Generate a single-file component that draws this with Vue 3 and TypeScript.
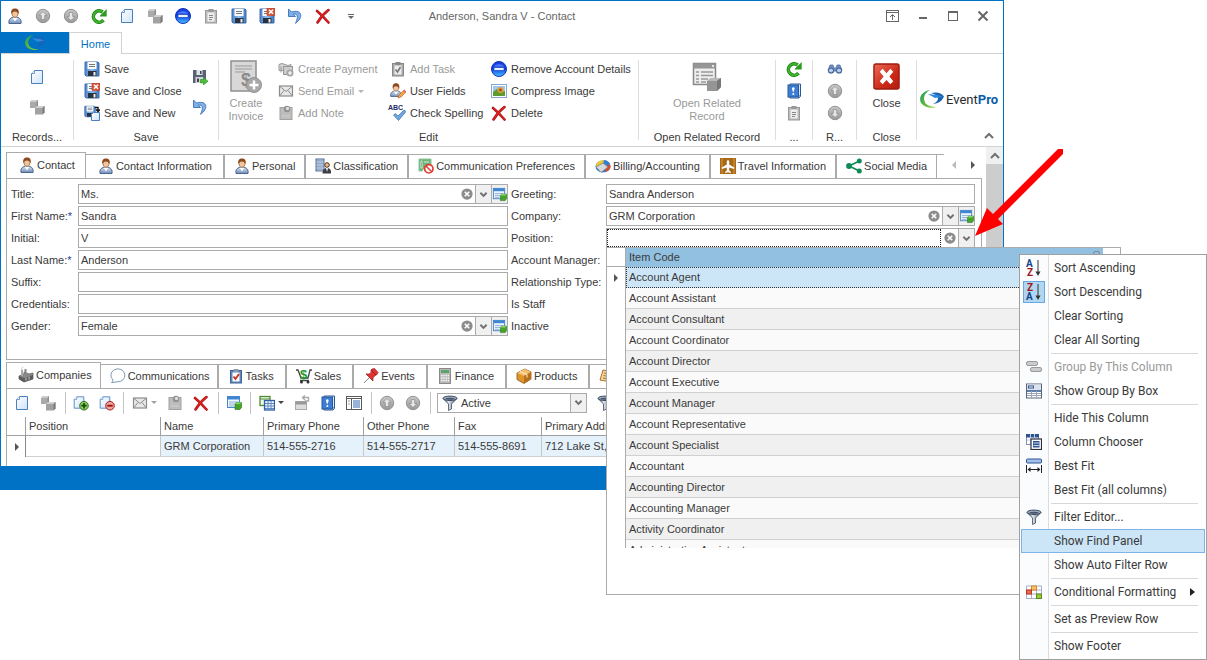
<script setup lang="ts">
import { h, ref } from 'vue'

interface IconProps { name: string }
interface Glyph { x: number; y: number; size: number; fill: string; char: string }
interface Tab { icon: string; label: string }
interface MenuItem { label?: string; icon?: string; disabled?: boolean; checked?: boolean; active?: boolean; sub?: boolean; sep?: boolean }
interface Action { icon: string; label: string; disabled?: boolean; drop?: boolean }

const glyphs: Record<string, Glyph[]> = {
  az: [
    { x: 0, y: 7, size: 10, fill: '#17468c', char: 'A' },
    { x: 1, y: 16, size: 10, fill: '#a31515', char: 'Z' },
  ],
  za: [
    { x: 1, y: 7, size: 10, fill: '#a31515', char: 'Z' },
    { x: 0, y: 16, size: 10, fill: '#17468c', char: 'A' },
  ],
  spell: [{ x: -2, y: 5, size: 7, fill: '#222c66', char: 'ABC' }],
  sales: [{ x: 4, y: 11, size: 13, fill: '#1f9a2c', char: '$' }],
}

const Icon = (props: IconProps) =>
  h('svg', { 'aria-hidden': 'true', viewBox: '0 0 16 16', overflow: 'visible' }, [
    h('use', { href: '#i-' + props.name, width: 16, height: 16 }),
    ...(glyphs[props.name] ?? []).map((g) =>
      h('text', { x: g.x, y: g.y, 'font-size': g.size, 'font-weight': 700, fill: g.fill }, g.char),
    ),
  ])

const quick: Tab[] = [
  { icon: 'person', label: 'Contact' },
  { icon: 'up', label: 'Previous' },
  { icon: 'down', label: 'Next' },
  { icon: 'refresh', label: 'Refresh' },
  { icon: 'page', label: 'New' },
  { icon: 'cubes', label: 'Copy' },
  { icon: 'remove', label: 'Remove' },
  { icon: 'clip', label: 'Paste' },
  { icon: 'save', label: 'Save' },
  { icon: 'saveclose', label: 'Save and Close' },
  { icon: 'undo', label: 'Undo' },
  { icon: 'x', label: 'Delete' },
]

const saveActions: Action[] = [
  { icon: 'save', label: 'Save' },
  { icon: 'saveclose', label: 'Save and Close' },
  { icon: 'savenew', label: 'Save and New' },
]

const editActions: Action[] = [
  { icon: 'payment', label: 'Create Payment', disabled: true },
  { icon: 'mail', label: 'Send Email', disabled: true, drop: true },
  { icon: 'note', label: 'Add Note', disabled: true },
  { icon: 'taskgrey', label: 'Add Task', disabled: true },
  { icon: 'userfields', label: 'User Fields' },
  { icon: 'spell', label: 'Check Spelling' },
  { icon: 'remove', label: 'Remove Account Details' },
  { icon: 'image', label: 'Compress Image' },
  { icon: 'x', label: 'Delete' },
]

const mainTabs: Tab[] = [
  { icon: 'person', label: 'Contact' },
  { icon: 'person', label: 'Contact Information' },
  { icon: 'person', label: 'Personal' },
  { icon: 'class', label: 'Classification' },
  { icon: 'compref', label: 'Communication Preferences' },
  { icon: 'billing', label: 'Billing/Accounting' },
  { icon: 'travel', label: 'Travel Information' },
  { icon: 'share', label: 'Social Media' },
]

const subTabs: Tab[] = [
  { icon: 'factory', label: 'Companies' },
  { icon: 'bubble', label: 'Communications' },
  { icon: 'task', label: 'Tasks' },
  { icon: 'sales', label: 'Sales' },
  { icon: 'pin', label: 'Events' },
  { icon: 'calc', label: 'Finance' },
  { icon: 'box', label: 'Products' },
  { icon: 'scroll', label: '' },
]

const title = ref('Ms.')
const firstName = ref('Sandra')
const initial = ref('V')
const lastName = ref('Anderson')
const suffix = ref('')
const credentials = ref('')
const gender = ref('Female')
const greeting = ref('Sandra Anderson')
const company = ref('GRM Corporation')
const position = ref('')
const filter = ref('Active')

const items = [
  'Account Agent', 'Account Assistant', 'Account Consultant', 'Account Coordinator',
  'Account Director', 'Account Executive', 'Account Manager', 'Account Representative',
  'Account Specialist', 'Accountant', 'Accounting Director', 'Accounting Manager',
  'Activity Coordinator', 'Administrative Assistant',
]

const menu: MenuItem[] = [
  { label: 'Sort Ascending', icon: 'az' },
  { label: 'Sort Descending', icon: 'za', checked: true },
  { label: 'Clear Sorting' },
  { label: 'Clear All Sorting' },
  { sep: true },
  { label: 'Group By This Column', icon: 'group', disabled: true },
  { label: 'Show Group By Box', icon: 'groupbox' },
  { sep: true },
  { label: 'Hide This Column' },
  { label: 'Column Chooser', icon: 'chooser' },
  { label: 'Best Fit', icon: 'bestfit' },
  { label: 'Best Fit (all columns)' },
  { sep: true },
  { label: 'Filter Editor...', icon: 'funnel' },
  { label: 'Show Find Panel', active: true },
  { label: 'Show Auto Filter Row' },
  { sep: true },
  { label: 'Conditional Formatting', icon: 'condfmt', sub: true },
  { sep: true },
  { label: 'Set as Preview Row' },
  { sep: true },
  { label: 'Show Footer' },
]
</script>

<template>
  <svg class="sprite" aria-hidden="true">
    <defs>
      <linearGradient id="g-grey" x1="0" y1="0" x2="0" y2="1"><stop offset="0" stop-color="#c8c8c8" /><stop offset="1" stop-color="#999999" /></linearGradient>
      <linearGradient id="g-page" x1="0" y1="0" x2="1" y2="1"><stop offset="0" stop-color="#ffffff" /><stop offset="1" stop-color="#cfe4fa" /></linearGradient>
      <linearGradient id="g-blue" x1="0" y1="0" x2="0" y2="1"><stop offset="0" stop-color="#1a3fe0" /><stop offset=".5" stop-color="#0d45e8" /><stop offset="1" stop-color="#4cc4ff" /></linearGradient>
      <linearGradient id="g-suit" x1="0" y1="0" x2="0" y2="1"><stop offset="0" stop-color="#d5dfec" /><stop offset="1" stop-color="#6f8db8" /></linearGradient>
      <linearGradient id="g-disk" x1="0" y1="0" x2="1" y2="0"><stop offset="0" stop-color="#4d84c8" /><stop offset=".5" stop-color="#8fbcec" /><stop offset="1" stop-color="#3f78be" /></linearGradient>
      <linearGradient id="g-red" x1="0" y1="0" x2="1" y2="1"><stop offset="0" stop-color="#ee6a58" /><stop offset=".6" stop-color="#cc2a18" /><stop offset="1" stop-color="#b01c10" /></linearGradient>
      <linearGradient id="g-swirl" x1="0" y1="0" x2="1" y2="1"><stop offset="0" stop-color="#1f9a5c" /><stop offset="1" stop-color="#8fd12c" /></linearGradient>
      <linearGradient id="g-funnel" x1="0" y1="0" x2="1" y2="0"><stop offset="0" stop-color="#3d4a5c" /><stop offset=".4" stop-color="#dfe6ee" /><stop offset="1" stop-color="#47566b" /></linearGradient>
    </defs>
    <symbol id="i-person" viewBox="0 0 16 16">
      <path d="M2 15.500c-.6-3 .5-5 3-6h6c2.500 1 3.600 3 3 6z" fill="url(#g-suit)" stroke="#4a6590" />
      <path d="M5.500 9.500l2.500 4 2.500-4z" fill="#fff" /><ellipse cx="8" cy="5.700" rx="3" ry="3.600" fill="#f2c49b" stroke="#8a5328" stroke-width=".6" />
      <path d="M4.300 6.500C3.600 2 5.300.4 8 .4s4.400 1.600 3.700 6.100C11 4.500 9.800 3.600 7.700 3.600 6 3.700 5 4.500 4.300 6.500z" fill="#8a4a1e" />
    </symbol>
    <symbol id="i-up" viewBox="0 0 16 16"><circle cx="8" cy="8" r="6.700" fill="url(#g-grey)" stroke="#929292" /><path d="M8 3.500l4 4H9.700v4H6.300v-4H4z" fill="#e6e6e6" stroke="#808080" stroke-width=".6" /></symbol>
    <symbol id="i-down" viewBox="0 0 16 16"><circle cx="8" cy="8" r="6.700" fill="url(#g-grey)" stroke="#929292" /><path d="M8 12.500l4-4H9.700v-4H6.300v4H4z" fill="#e6e6e6" stroke="#808080" stroke-width=".6" /></symbol>
    <symbol id="i-refresh" viewBox="0 0 16 16"><path d="M12.500 12.200A5.700 5.700 0 1 1 11.600 4" fill="none" stroke="#188018" stroke-width="3.600" /><path d="M12.500 12.200A5.700 5.700 0 1 1 11.600 4" fill="none" stroke="#40b428" stroke-width="2" /><path d="M9 7.500L15.700 1v7.500H9z" fill="#2c9a20" /></symbol>
    <symbol id="i-page" viewBox="0 0 16 16"><path d="M5.500 1.500h8v13h-11v-10z" fill="url(#g-page)" stroke="#4a7fc0" /><path d="M2.500 4.500h3v-3" fill="#fff" stroke="#6f9bd0" /></symbol>
    <symbol id="i-cubes" viewBox="0 0 16 16"><path d="M1 3l2-2h6v6L7.500 9H1z" fill="#aaa" /><path d="M1 3l2-2h6L7.500 3z" fill="#ccc" /><path d="M7.500 3v6L9 7V1z" fill="#8c8c8c" /><path d="M6 9l2-2h7.500v6.500L13.500 15.500H6z" fill="#a2a2a2" /><path d="M6 9l2-2h7.500l-2 2z" fill="#d0d0d0" /><path d="M13.500 9v6.500l2-2V7z" fill="#7c7c7c" /></symbol>
    <symbol id="i-remove" viewBox="0 0 16 16"><circle cx="8" cy="8" r="7.500" fill="url(#g-blue)" stroke="#1230b8" /><path d="M2.500 5.500Q8 1 13.500 5.500z" fill="#7fa0ff" opacity=".6" /><rect x="3" y="6.500" width="10" height="3" fill="#e8f4ff" stroke="#0a35b0" stroke-width=".6" /></symbol>
    <symbol id="i-clip" viewBox="0 0 16 16"><rect x="2.500" y="2.500" width="11" height="12.500" fill="#bbb" stroke="#999" /><rect x="4.500" y="4.500" width="7" height="9" fill="#eee" /><rect x="5.500" y="1" width="5" height="3" fill="#999" /><path d="M6 7.500h4M6 9.500h4M6 11.500h3" stroke="#888" /></symbol>
    <symbol id="i-save" viewBox="0 0 16 16"><path d="M1 1h13l1 1v13H2l-1-1z" fill="url(#g-disk)" stroke="#3a6cad" /><rect x="3.500" y="1" width="9" height="7" fill="#fafafa" /><path d="M5 3.500h6M5 5.500h6" stroke="#777" /><rect x="4" y="10" width="8.500" height="5" fill="#28323e" /><rect x="9.500" y="11" width="2" height="3.500" fill="#f0f0f0" /></symbol>
    <symbol id="i-saveclose" viewBox="0 0 16 16"><use href="#i-save" width="16" height="16" /><rect x="8" y="0" width="8" height="7.500" fill="#d8583c" stroke="#b83820" stroke-width=".6" /><path d="M10 1.800l4 4M14 1.800l-4 4" stroke="#fff" stroke-width="1.500" /></symbol>
    <symbol id="i-savenew" viewBox="0 0 16 16"><use href="#i-save" width="12" height="13" /><path d="M9.500 7.500h6v8h-8v-6z" fill="url(#g-page)" stroke="#4a7fc0" /><path d="M11 2.500h3V6M12 4.500l2 2 2-2" fill="none" stroke="#111" stroke-width="1.400" /></symbol>
    <symbol id="i-savego" viewBox="0 0 16 16"><path d="M1 1h13v13H1z" fill="#596274" /><rect x="4.500" y="1" width="6" height="5" fill="#dfe3ea" /><rect x="8" y="2" width="1.500" height="3" fill="#444" /><rect x="3.500" y="8" width="8" height="6" fill="#d2d5dc" /><rect x="5" y="9.500" width="2" height="3.500" fill="#444" /><path d="M8.500 10.500h3V8.500l4.500 3.700-4.500 3.700v-2h-3z" fill="#4cc038" stroke="#2a8c20" stroke-width=".6" /></symbol>
    <symbol id="i-undo" viewBox="0 0 16 16"><path d="M1.500 1v7.500h7L6.300 6.300C10 5 12 8 8.500 15.300 16.500 10 15.500.8 4.500 4z" fill="#7fb0e8" stroke="#3a70b8" stroke-width=".9" /></symbol>
    <symbol id="i-x" viewBox="0 0 16 16"><path d="M2 3c3 2.500 8 7.500 11.500 11.500M13.500 2C9.500 5 5.500 9.500 2.500 14.500" fill="none" stroke="#a01414" stroke-width="2.600" stroke-linecap="round" /><path d="M2 3c3 2.500 8 7.500 11.500 11.500M13.500 2C9.500 5 5.500 9.500 2.500 14.500" fill="none" stroke="#dc2020" stroke-width="1.600" stroke-linecap="round" /></symbol>
    <symbol id="i-payment" viewBox="0 0 16 16"><path d="M1 3.500q3-2 6 0t6 0v6H1z" fill="#d5d5d5" stroke="#999" /><path d="M3 5.500v6M6 6v6" stroke="#999" /><rect x="5.500" y="5.500" width="9" height="8" fill="#ccc" stroke="#999" /><circle cx="12" cy="12" r="3.500" fill="#a5a5a5" /><path d="M12 10v4M10 12h4" stroke="#fff" stroke-width="1.200" /></symbol>
    <symbol id="i-mail" viewBox="0 0 16 16"><rect x="1.500" y="3" width="13" height="10" fill="#e8e8e8" stroke="#8c8c8c" stroke-width="1.200" /><path d="M2 3.500l6 5 6-5M2 12.500l4-5M14 12.500l-4-5" fill="none" stroke="#8c8c8c" /></symbol>
    <symbol id="i-note" viewBox="0 0 16 16"><rect x="2" y="2.500" width="12" height="12" fill="#bdbdbd" stroke="#a2a2a2" /><circle cx="9" cy="4" r="3.200" fill="#909090" /><circle cx="9.500" cy="3.500" r="1.700" fill="#ddd" /><path d="M4 11h8" stroke="#cfcfcf" /></symbol>
    <symbol id="i-taskgrey" viewBox="0 0 16 16"><rect x="2.500" y="2.500" width="11" height="12.500" fill="#aaa" stroke="#888" /><rect x="4.500" y="4.500" width="7" height="9" fill="#eee" /><rect x="5.500" y="1" width="5" height="3" fill="#888" /><path d="M5.500 8.500l2 2.500 3-5" fill="none" stroke="#777" stroke-width="1.600" /></symbol>
    <symbol id="i-task" viewBox="0 0 16 16"><rect x="2.500" y="2.500" width="11" height="12.500" fill="#5c86bc" stroke="#3c6498" /><rect x="4.500" y="4.500" width="7" height="9" fill="#fff" /><rect x="5.500" y="1" width="5" height="3" fill="#8a9bb0" /><path d="M5.500 8.500l2 2.500 3.500-5" fill="none" stroke="#c83020" stroke-width="1.800" /></symbol>
    <symbol id="i-userfields" viewBox="0 0 16 16"><use href="#i-person" x="-1" width="14" height="14" /><path d="M8 15l1-3 5-5 2 2-5 5z" fill="#f0a848" stroke="#c86418" stroke-width=".7" /><path d="M13 8l1.500-1.500 1.500 2L15 9.500z" fill="#d86890" /></symbol>
    <symbol id="i-spell" viewBox="0 0 16 16"><path d="M3.500 10l2-1.500 2.500 2.500L14 5l2 1.500L8.500 15.500z" fill="#6fa8e0" stroke="#3a6eaa" stroke-width=".7" /></symbol>
    <symbol id="i-image" viewBox="0 0 16 16"><rect x=".5" y="1.500" width="15" height="13" fill="#fff" stroke="#8aa6d0" /><rect x="2" y="3" width="12" height="10" fill="#9cc8f4" /><path d="M2 13V9l4-3 3 3 5-1v5z" fill="#5f9a2c" /><circle cx="9.500" cy="7" r="3" fill="#e89a30" /><circle cx="9.500" cy="7" r="1.200" fill="#7c4a12" /></symbol>
    <symbol id="i-invoice" viewBox="0 0 32 36"><rect x="1" y="1" width="25" height="30" fill="#d8d8d8" stroke="#8f8f8f" stroke-width="1.500" /><path d="M5 6h17M5 9h17M5 12h10" stroke="#999" /></symbol>
    <symbol id="i-plus" viewBox="0 0 16 16"><circle cx="8" cy="8" r="7.500" fill="#a8a8a8" stroke="#929292" /><path d="M8 3.500v9M3.500 8h9" stroke="#fff" stroke-width="2.500" /></symbol>
    <symbol id="i-openrel" viewBox="0 0 32 32"><rect x="1.500" y="1.500" width="22" height="21" fill="#eee" stroke="#888" stroke-width="1.500" /><rect x="1.500" y="1.500" width="22" height="5" fill="#969696" /><circle cx="21" cy="4" r="1" fill="#fff" /><path d="M4 10h3M9 10h12M4 13.500h3M9 13.500h12M4 17h3M9 17h7M4 20h3M9 20h5" stroke="#999" stroke-width="1.300" /><path d="M15 19l4-3h10v9l-4 4h-10z" fill="#959595" /><path d="M15 19l4-3h10l-4 3z" fill="#b9b9b9" /><path d="M25 19v10l4-4V16z" fill="#777" /></symbol>
    <symbol id="i-book" viewBox="0 0 16 16"><path d="M4 1h10.500v12H4z" fill="#dce8f6" stroke="#28589c" /><path d="M3 13l1 2h9l1.500-2" fill="#dce8f6" stroke="#28589c" /><rect x="2" y="2" width="10.500" height="12" fill="#3d7ed4" stroke="#28589c" /><path d="M7.300 4.300q2 0 1 2.500l-.5 2h-1l-.5-2q-1-2.500 1-2.500z" fill="#fff" /><circle cx="7.300" cy="11" r="1" fill="#fff" /></symbol>
    <symbol id="i-binoc" viewBox="0 0 16 16"><path d="M3 4h3l1 3h2l1-3h3l2 5-1 3h-4l-1-2H7l-1 2H2L1 9z" fill="#6f8fc4" stroke="#4c689a" stroke-width=".7" /><circle cx="4" cy="9.500" r="2.500" fill="#b8ccec" stroke="#3c5a90" /><circle cx="12" cy="9.500" r="2.500" fill="#b8ccec" stroke="#3c5a90" /></symbol>
    <symbol id="i-closebig" viewBox="0 0 28 28"><rect x="1" y="1" width="26" height="26" rx="2" fill="url(#g-red)" stroke="#9e1c10" stroke-width="1.500" /><path d="M7 9l3-3 4 4.500L18 6l3 3-4 5 4 5-3 3-4-4.500L10 22l-3-3 4-5z" fill="#fff" /></symbol>
    <symbol id="i-class" viewBox="0 0 16 16"><rect x="1" y="1" width="8" height="12" fill="#7f98bc" stroke="#5a7298" /><path d="M3 1v12M5 1v12M7 1v12M1 4h8M1 7h8M1 10h8" stroke="#c8d6ea" stroke-width=".7" /><circle cx="12" cy="7" r="2.300" fill="#f0bc84" stroke="#4a3020" /><path d="M7.500 15.500q0-5.500 4.500-5.500t4 5.500z" fill="#3c3c44" /><path d="M11 10h2l-1 4z" fill="#fff" /></symbol>
    <symbol id="i-compref" viewBox="0 0 16 16"><path d="M1 1h12v9H6l-2 3H1z" fill="#6cb478" stroke="#8cc498" /><path d="M3 3h1v7H3zM6 4h5" stroke="#d8f0dc" /><circle cx="10.800" cy="10.800" r="4.200" fill="#fff" stroke="#e03c30" stroke-width="1.700" /><path d="M8 8l6 6" stroke="#e03c30" stroke-width="1.500" /></symbol>
    <symbol id="i-billing" viewBox="0 0 16 16"><ellipse cx="8" cy="8.500" rx="7.500" ry="6" fill="#2f7fd4" /><path d="M8 8.500L1 9q-1-6 8-7z" fill="#f0c830" /><path d="M8 8.500l7-2q2 4-4 7.500z" fill="#d84a30" /><path d="M8 8.500L15 6q-2-4-6-4z" fill="#2f7fd4" /><path d="M1 9l7-4 5 4-7 5.500z" fill="#d4d8dc" stroke="#777" stroke-width=".7" /></symbol>
    <symbol id="i-travel" viewBox="0 0 16 16"><rect width="16" height="16" fill="#a8681a" /><path d="M2 0v16M14 0v16" stroke="#d49c3c" /><path d="M8 1.500l1.200 2V6.500l5 3V11l-5-1.500v3L11 14v1l-3-.8L5 15v-1l1.800-1.500v-3L1.800 11V9.500l5-3v-3z" fill="#fff" /></symbol>
    <symbol id="i-share" viewBox="0 0 16 16"><path d="M13.500 3L3 8l10.500 5" fill="none" stroke="#0e8a54" stroke-width="1.700" /><circle cx="13.300" cy="3" r="2.500" fill="#0e8a54" /><circle cx="3" cy="8" r="2.900" fill="#0e8a54" /><circle cx="13.300" cy="13" r="2.500" fill="#0e8a54" /></symbol>
    <symbol id="i-factory" viewBox="0 0 16 16"><path d="M1 9l5-2V5l5 2 4-1v6l-9 3-5-3z" fill="#8a8a8a" stroke="#5a5a5a" stroke-width=".7" /><path d="M1 9l5 2 9-3v4l-9 3-5-3z" fill="#5c5c5c" /><rect x="3" y="3" width="2" height="6" fill="#aaa" /><rect x="6.500" y="2" width="2" height="6" fill="#888" /><path d="M4 3Q3 1 5 0M8 10.500v3M11 9.500v3" stroke="#ccc" fill="none" /></symbol>
    <symbol id="i-bubble" viewBox="0 0 16 16"><path d="M1.500 14.500q1.500-1 1.500-2.500A7 6.500 0 1 1 7 13.800Q4 14.500 1.500 14.500z" fill="#fff" stroke="#7c98b4" /></symbol>
    <symbol id="i-sales" viewBox="0 0 16 16"><path d="M0 2h2l3 8h7l2-8h2M4 12.500h9" fill="none" stroke="#444" stroke-width="1.300" /><circle cx="5.500" cy="14" r="1.500" fill="#333" /><circle cx="12" cy="14" r="1.500" fill="#333" /></symbol>
    <symbol id="i-pin" viewBox="0 0 16 16"><path d="M6 10l-5 5" stroke="#888" /><path d="M8 2l5 5 1-.5 1-2L11.500.5 9 1zM8 2Q9 5 6 6H3l7 7V10q1-2 3-3z" fill="#e03434" stroke="#a01818" stroke-width=".7" /></symbol>
    <symbol id="i-calc" viewBox="0 0 16 16"><rect x="2.500" y=".5" width="11" height="15" fill="#b8b8b8" stroke="#8a8a8a" /><rect x="4" y="2" width="8" height="3" fill="#5ca46c" /><path d="M4 7.500h8M4 10h8M4 12.500h8" stroke="#f4f4f4" stroke-width="1.400" stroke-dasharray="1.500 .7" /></symbol>
    <symbol id="i-box" viewBox="0 0 16 16"><path d="M1 5l8-4 6 3v7l-7 4.500-7-4z" fill="#e0962c" stroke="#8a5210" stroke-width=".8" /><path d="M1 5l7 3 7-4-6-3z" fill="#f4c070" /><path d="M8 8v7.500l7-4.500V4z" fill="#b8701c" /><path d="M4 3.500l7 3v3" fill="none" stroke="#fff0c8" /></symbol>
    <symbol id="i-scroll" viewBox="0 0 16 16"><path d="M4 2l10 2-2 10L1 12z" fill="#f4d49c" stroke="#a8742c" /><path d="M5 5l6 1.200M4.500 7.500l6 1.200M4 10l6 1.200" stroke="#a8742c" /></symbol>
    <symbol id="i-addpage" viewBox="0 0 16 16"><use href="#i-page" x="-1" width="14" height="15" /><circle cx="11" cy="10.700" r="4.300" fill="#8ccc64" stroke="#2f701c" /><path d="M11 8v5.400M8.300 10.700h5.400" stroke="#174c0c" stroke-width="1.700" /></symbol>
    <symbol id="i-delpage" viewBox="0 0 16 16"><use href="#i-page" x="-1" width="14" height="15" /><circle cx="11" cy="10.700" r="4.300" fill="#f0a49c" stroke="#a82020" /><path d="M8.300 10.700h5.400" stroke="#981414" stroke-width="1.900" /></symbol>
    <symbol id="i-lookup" viewBox="0 0 16 16"><rect x="1.500" y="1.500" width="12" height="11" fill="#eef6fc" stroke="#4a86c8" /><rect x="1.500" y="1.500" width="12" height="3" fill="#3f86d4" /><path d="M3 7h9M3 9h6M3 11h5" stroke="#8ab0d8" /><path d="M9 9l1.500-1.500H15.500v5L14 14.500H9z" fill="#44a428" stroke="#23701a" stroke-width=".6" /><path d="M9 9l1.500-1.500H15.500L14 9z" fill="#8cd86c" /></symbol>
    <symbol id="i-multi" viewBox="0 0 16 16"><rect x="1" y="1.500" width="10" height="9" fill="#eef8e4" stroke="#4c8a34" stroke-width="1.300" /><path d="M1 4h10" stroke="#4c8a34" /><rect x="5.500" y="5.500" width="10" height="9.500" fill="#eef4fc" stroke="#2e60a8" stroke-width="1.300" /><path d="M6 8.500h9M6 11h9M6 13.500h9M9 6v9M12 6v9" stroke="#6088c0" /></symbol>
    <symbol id="i-restore" viewBox="0 0 16 16"><rect x="1.500" y="6.500" width="11" height="8" fill="#ddd" stroke="#aaa" /><rect x="1.500" y="6.500" width="11" height="3" fill="#999" /><path d="M9 2.500h5.500V6H11M11 .5L8.500 2.500 11 5" fill="none" stroke="#aaa" stroke-width="1.400" /></symbol>
    <symbol id="i-layout" viewBox="0 0 16 16"><rect x=".5" y="1.500" width="15" height="13" fill="#fff" stroke="#5a5a5a" /><path d="M1 3.500h14M5.500 3.500v11" stroke="#5a5a5a" /><path d="M7 6h7M7 8h7M7 10h7M7 12h7" stroke="#2e66b4" /><path d="M2 6h2M2 9h2" stroke="#999" /></symbol>
    <symbol id="i-funnel" viewBox="0 0 16 16"><path d="M1 3.500L6.500 9v6.500l3-1.500V9L15 3.500z" fill="url(#g-funnel)" stroke="#3f4c5e" stroke-width=".8" /><ellipse cx="8" cy="3.300" rx="7" ry="2.200" fill="#9fb0c4" stroke="#3f4c5e" /><ellipse cx="8" cy="3.800" rx="4.500" ry="1" fill="#47566b" /></symbol>
    <symbol id="i-clear" viewBox="0 0 16 16"><circle cx="8" cy="8" r="7.500" fill="#8c8c8c" /><path d="M5 5l6 6M11 5l-6 6" stroke="#fff" stroke-width="2" /></symbol>
    <symbol id="i-chev" viewBox="0 0 16 16"><path d="M3.500 5.500L8 10l4.500-4.500" fill="none" stroke="#707070" stroke-width="2.800" /></symbol>
    <symbol id="i-chevup" viewBox="0 0 16 16"><path d="M4 10l4-4 4 4" fill="none" stroke="#707070" stroke-width="2" /></symbol>
    <symbol id="i-az" viewBox="0 0 16 16"><path d="M12 0v14" stroke="#333" /><path d="M9.500 11.500h5L12 16z" fill="#333" /></symbol>
    <symbol id="i-za" viewBox="0 0 16 16"><path d="M12 0v14" stroke="#333" /><path d="M9.500 11.500h5L12 16z" fill="#333" /></symbol>
    <symbol id="i-group" viewBox="0 0 16 16"><rect x=".5" y="2.500" width="11" height="4" rx="1.500" fill="#ccc" stroke="#999" /><rect x="4.500" y="8.500" width="11" height="4" rx="1.500" fill="#ccc" stroke="#999" /></symbol>
    <symbol id="i-groupbox" viewBox="0 0 16 16"><rect x=".5" y="1" width="15" height="14" fill="#fff" stroke="#5a6478" /><rect x="1" y="1.500" width="14" height="6" fill="#dde3ee" /><rect x="2.500" y="3" width="5" height="2" fill="#fff" stroke="#2e5490" /><path d="M1 8h14" stroke="#2e5490" stroke-width="1.500" /><path d="M1 10.500h14M1 12.500h14M5.500 8v7M10.500 8v7" stroke="#9aa4b8" /></symbol>
    <symbol id="i-chooser" viewBox="0 0 16 16"><rect x=".5" y=".5" width="12" height="10" fill="#fff" stroke="#7c94bc" /><rect x="0" y="0" width="13" height="3.500" fill="#2e5490" /><path d="M4.500 0v10M8.500 0v10M1 6h4" stroke="#c0cce0" /><rect x="5" y="5" width="10.500" height="10.500" fill="#fff" stroke="#2a2f3c" stroke-width="1.200" /><rect x="7" y="7" width="6.500" height="6.500" fill="#2e5490" /><path d="M7.500 9h6M7.500 11.500h6" stroke="#c9d8f0" /></symbol>
    <symbol id="i-bestfit" viewBox="0 0 16 16"><rect x=".5" y="1" width="15" height="4" rx="1" fill="#a4c0ec" stroke="#2e5490" /><path d="M.5 7v8M15.500 7v8M2 11.500h12" stroke="#222" /><path d="M1.500 11.500l3-2.500v5zM14.500 11.500l-3-2.500v5z" fill="#222" /></symbol>
    <symbol id="i-condfmt" viewBox="0 0 16 16"><rect x=".5" y="2" width="15" height="12.500" fill="#fff" stroke="#a8b0cc" /><path d="M.5 6h15M.5 10h15M5.500 2v12M10.500 2v12" stroke="#a8b0cc" /><rect x="5.500" y="2" width="5" height="4" fill="#f8c068" stroke="#d08a20" /><rect x=".5" y="6" width="5" height="4" fill="#e86850" stroke="#c03420" /><rect x="10.500" y="10" width="5" height="4.500" fill="#9ac83c" stroke="#5c8a1c" /></symbol>
    <symbol id="i-ribbonopt" viewBox="0 0 16 16"><rect x="1.500" y="2.500" width="12" height="11" fill="none" stroke="#666" /><path d="M1.500 4.500h12" stroke="#666" /><path d="M7.500 12V7M5 9l2.500-2.500L10 9" fill="none" stroke="#666" /></symbol>
    <symbol id="i-min" viewBox="0 0 16 16"><path d="M4 10h8" stroke="#666" stroke-width="2" /></symbol>
    <symbol id="i-max" viewBox="0 0 16 16"><rect x="3.500" y="3.500" width="9" height="9" fill="none" stroke="#666" /><path d="M3 4h10" stroke="#666" stroke-width="2" /></symbol>
    <symbol id="i-closewin" viewBox="0 0 16 16"><path d="M3.500 3.500l9 9M12.500 3.500l-9 9" stroke="#666" stroke-width="2" /></symbol>
    <symbol id="i-swirl" viewBox="0 0 26 20"><path d="M11 1C-1 3-3 16 10 18.500q4 .8 7-.5Q6 18 5 10.500 4.500 4.500 11 1z" fill="url(#g-swirl)" /><path d="M12 4q9-2 13 3.500-3 7-11 7.500 5-2.500 5-5.500 0-4-7-5.500z" fill="#1a62b4" /><path d="M9 5l10 1 5 2-8 1z" fill="#2f88d8" /></symbol>
  </svg>

  <main class="page">
    <section class="window" aria-label="Contact window">
      <header class="titlebar">
        <div class="quick">
          <button v-for="q in quick" :key="q.icon" type="button" :aria-label="q.label"><Icon :name="q.icon" class="ico" /></button>
          <button type="button" aria-label="Customize toolbar"><span class="overflow-mark"></span></button>
        </div>
        <h1>Anderson, Sandra V - Contact</h1>
        <div class="winctl">
          <button type="button" aria-label="Ribbon options"><Icon name="ribbonopt" class="ico" /></button>
          <button type="button" aria-label="Minimize"><Icon name="min" class="ico" /></button>
          <button type="button" aria-label="Maximize"><Icon name="max" class="ico" /></button>
          <button type="button" aria-label="Close window"><Icon name="closewin" class="ico" /></button>
        </div>
      </header>

      <nav class="ribbon-tabs">
        <button type="button" class="app-button" aria-label="Application menu"><svg viewBox="0 0 26 20" aria-hidden="true"><use href="#i-swirl" width="26" height="20" /></svg></button>
        <button type="button" class="home">Home</button>
      </nav>

      <div class="ribbon">
        <div class="group g-records">
          <div class="stack">
            <button type="button" aria-label="New record"><Icon name="page" class="ico" /></button>
            <button type="button" aria-label="Copy record"><Icon name="cubes" class="ico" /></button>
          </div>
          <div class="caption">Records...</div>
        </div>
        <div class="group g-save">
          <div class="row">
            <div class="actions save-actions">
              <button v-for="a in saveActions" :key="a.label" type="button" class="action"><Icon :name="a.icon" class="ico" />{{ a.label }}</button>
            </div>
            <div class="stack">
              <button type="button" aria-label="Save and continue"><Icon name="savego" class="ico" /></button>
              <button type="button" aria-label="Undo changes"><Icon name="undo" class="ico" /></button>
            </div>
          </div>
          <div class="caption">Save</div>
        </div>
        <div class="group g-edit">
          <div class="row">
            <button type="button" class="large" disabled>
              <svg class="big" viewBox="0 0 32 36" aria-hidden="true">
                <use href="#i-invoice" y="2" width="32" height="36" />
                <text x="11" y="28" font-size="18" font-weight="700" fill="#8a8a8a">$</text>
                <use href="#i-plus" x="16" y="19" width="16" height="16" />
              </svg>
              <span>Create<br />Invoice</span>
            </button>
            <div class="actions edit-actions">
              <button v-for="a in editActions" :key="a.label" type="button" class="action" :disabled="a.disabled"><Icon :name="a.icon" class="ico" />{{ a.label }}<i v-if="a.drop" class="tri"></i></button>
            </div>
          </div>
          <div class="caption">Edit</div>
        </div>
        <div class="group g-open">
          <button type="button" class="large" disabled><svg class="big" viewBox="0 0 32 36" aria-hidden="true"><use href="#i-openrel" x="1" y="4" width="32" height="32" /></svg><span>Open Related<br />Record</span></button>
          <div class="caption">Open Related Record</div>
        </div>
        <div class="group g-more">
          <div class="column">
            <button type="button" aria-label="Refresh"><Icon name="refresh" class="ico" /></button>
            <button type="button" aria-label="Log"><Icon name="book" class="ico" /></button>
            <button type="button" aria-label="Clipboard"><Icon name="clip" class="ico" /></button>
          </div>
          <div class="caption">...</div>
        </div>
        <div class="group g-nav">
          <div class="column">
            <button type="button" aria-label="Find"><Icon name="binoc" class="ico" /></button>
            <button type="button" aria-label="Previous record"><Icon name="up" class="ico" /></button>
            <button type="button" aria-label="Next record"><Icon name="down" class="ico" /></button>
          </div>
          <div class="caption">R...</div>
        </div>
        <div class="group g-close">
          <button type="button" class="large"><svg class="big" viewBox="0 0 32 36" aria-hidden="true"><use href="#i-closebig" x="2" y="5" width="27" height="27" /></svg><span>Close</span></button>
          <div class="caption">Close</div>
        </div>
        <div class="brand">
          <div class="logo"><svg viewBox="0 0 26 20" aria-hidden="true"><use href="#i-swirl" width="26" height="20" /></svg><span>Event<b>Pro</b></span></div>
          <button type="button" class="collapse" aria-label="Collapse ribbon"><Icon name="chevup" class="ico" /></button>
        </div>
      </div>

      <div class="body">
        <div class="content">
          <div class="tabs main-tabs" role="tablist">
            <button v-for="(t, i) in mainTabs" :key="t.label" type="button" role="tab" class="tab" :class="{ active: i === 0 }" :aria-selected="i === 0"><Icon :name="t.icon" class="ico" />{{ t.label }}</button>
            <span class="tab-rest"></span>
            <button type="button" class="tab-nav" aria-label="Previous tabs" disabled><i class="left"></i></button>
            <button type="button" class="tab-nav" aria-label="More tabs"><i class="right"></i></button>
          </div>

          <form class="form" @submit.prevent>
            <label for="f-title">Title:</label>
            <div class="field">
              <select id="f-title" v-model="title"><option>Ms.</option></select>
              <button type="button" class="clear" aria-label="Clear title"><Icon name="clear" /></button>
              <button type="button" class="part" aria-label="Open title list"><Icon name="chev" /></button>
              <button type="button" class="part look" aria-label="Look up title"><Icon name="lookup" /></button>
            </div>
            <label for="f-greet">Greeting:</label>
            <div class="field"><input id="f-greet" v-model="greeting" type="text" /></div>

            <label for="f-first">First Name:<em>*</em></label>
            <div class="field"><input id="f-first" v-model="firstName" type="text" /></div>
            <label for="f-company">Company:</label>
            <div class="field">
              <select id="f-company" v-model="company"><option>GRM Corporation</option></select>
              <button type="button" class="clear" aria-label="Clear company"><Icon name="clear" /></button>
              <button type="button" class="part" aria-label="Open company list"><Icon name="chev" /></button>
              <button type="button" class="part look" aria-label="Look up company"><Icon name="lookup" /></button>
            </div>

            <label for="f-initial">Initial:</label>
            <div class="field"><input id="f-initial" v-model="initial" type="text" /></div>
            <label for="f-position">Position:</label>
            <div class="field open">
              <input id="f-position" v-model="position" class="focused" type="text" role="combobox" aria-expanded="true" aria-controls="position-list" />
              <button type="button" class="clear" aria-label="Clear position"><Icon name="clear" /></button>
              <button type="button" class="part" aria-label="Open position list"><Icon name="chev" /></button>

              <div class="popup">
                <div class="list-scroll">
                  <table id="position-list" class="list">
                    <colgroup><col class="mark" /><col /><col class="gutter" /></colgroup>
                    <thead><tr><td></td><th scope="col">Item Code</th><td></td></tr></thead>
                    <tbody>
                      <tr v-for="(it, i) in items" :key="it" :class="{ selected: i === 0 }">
                        <td class="m"><i v-if="i === 0" class="right"></i></td><td class="c">{{ it }}</td><td></td>
                      </tr>
                    </tbody>
                  </table>
                </div>
                <span class="header-grip"></span>

                <div class="menu" role="menu">
                  <template v-for="(m, i) in menu" :key="i">
                    <hr v-if="m.sep" />
                    <button v-else type="button" role="menuitem" class="item" :class="{ active: m.active }" :disabled="m.disabled">
                      <span class="slot" :class="{ checked: m.checked }"><Icon v-if="m.icon" :name="m.icon" class="ico" /></span>
                      <span class="text">{{ m.label }}</span>
                      <i v-if="m.sub" class="right"></i>
                    </button>
                  </template>
                </div>
              </div>
            </div>

            <label for="f-last">Last Name:<em>*</em></label>
            <div class="field"><input id="f-last" v-model="lastName" type="text" /></div>
            <label for="f-manager">Account Manager:</label>
            <div class="field"><input id="f-manager" type="text" /></div>

            <label for="f-suffix">Suffix:</label>
            <div class="field"><input id="f-suffix" v-model="suffix" type="text" /></div>
            <label for="f-rel">Relationship Type:</label>
            <div class="field"><input id="f-rel" type="text" /></div>

            <label for="f-cred">Credentials:</label>
            <div class="field"><input id="f-cred" v-model="credentials" type="text" /></div>
            <label for="f-staff">Is Staff</label>
            <div class="check"><input id="f-staff" type="checkbox" /></div>

            <label for="f-gender">Gender:</label>
            <div class="field">
              <select id="f-gender" v-model="gender"><option>Female</option></select>
              <button type="button" class="clear" aria-label="Clear gender"><Icon name="clear" /></button>
              <button type="button" class="part" aria-label="Open gender list"><Icon name="chev" /></button>
              <button type="button" class="part look" aria-label="Look up gender"><Icon name="lookup" /></button>
            </div>
            <label for="f-inactive">Inactive</label>
            <div class="check"><input id="f-inactive" type="checkbox" /></div>
          </form>

          <div class="lower">
            <div class="tabs sub-tabs" role="tablist">
              <button v-for="(t, i) in subTabs" :key="t.icon" type="button" role="tab" class="tab" :class="{ active: i === 0 }" :aria-selected="i === 0" :aria-label="t.label || 'More'"><Icon :name="t.icon" class="ico" />{{ t.label }}</button>
            </div>
            <div class="subpanel">
              <div class="tools">
                <div class="set">
                  <button type="button" aria-label="New"><Icon name="page" class="ico" /></button>
                  <button type="button" aria-label="Copy"><Icon name="cubes" class="ico" /></button>
                </div>
                <div class="set">
                  <button type="button" aria-label="Link"><Icon name="addpage" class="ico" /></button>
                  <button type="button" aria-label="Unlink"><Icon name="delpage" class="ico" /></button>
                </div>
                <div class="set">
                  <button type="button" aria-label="Email" class="with-drop dim"><Icon name="mail" class="ico" /><i class="tri"></i></button>
                  <button type="button" aria-label="Note"><Icon name="note" class="ico" /></button>
                  <button type="button" aria-label="Delete"><Icon name="x" class="ico" /></button>
                </div>
                <div class="set solo"><button type="button" aria-label="Open record"><Icon name="lookup" class="ico" /></button></div>
                <div class="set">
                  <button type="button" aria-label="Views" class="with-drop"><Icon name="multi" class="ico" /><i class="tri"></i></button>
                  <button type="button" aria-label="Restore layout"><Icon name="restore" class="ico" /></button>
                  <button type="button" aria-label="Log"><Icon name="book" class="ico" /></button>
                  <button type="button" aria-label="Layout"><Icon name="layout" class="ico" /></button>
                </div>
                <div class="set">
                  <button type="button" aria-label="Up"><Icon name="up" class="ico" /></button>
                  <button type="button" aria-label="Down"><Icon name="down" class="ico" /></button>
                </div>
                <div class="field filter">
                  <Icon name="funnel" class="ico" />
                  <select v-model="filter" aria-label="Filter"><option>Active</option></select>
                  <button type="button" class="part" aria-label="Open filter list"><Icon name="chev" /></button>
                </div>
                <button type="button" aria-label="Edit filter"><Icon name="funnel" class="ico" /></button>
              </div>

              <table class="grid">
                <colgroup><col class="c0" /><col class="c1" /><col class="c2" /><col class="c3" /><col class="c4" /><col class="c5" /><col /></colgroup>
                <thead><tr><td></td><th>Position</th><th>Name</th><th>Primary Phone</th><th>Other Phone</th><th>Fax</th><th>Primary Address</th></tr></thead>
                <tbody><tr><td class="m"><i class="right"></i></td><td class="current"></td><td>GRM Corporation</td><td>514-555-2716</td><td>514-555-2717</td><td>514-555-8691</td><td>712 Lake St,</td></tr></tbody>
              </table>
            </div>
          </div>
        </div>
        <div class="scrollbar"><button type="button" aria-label="Scroll up"><Icon name="chevup" class="ico" /></button></div>
      </div>
      <footer class="status"></footer>

      <svg class="pointer" viewBox="0 0 90 90" aria-hidden="true"><polygon points="0,88 12,60 18,66 83,1 88,1 88,6 23,71 28,76" fill="#ff0000" /></svg>
    </section>
  </main>
</template>

<style>
body { background: #fff; }
</style>

<style scoped>
.sprite { position: absolute; width: 0; height: 0; }
.page, .page button, .page input, .page select {
  font-family: "Liberation Sans", Arial, sans-serif;
  font-size: 11px;
  color: #3a3a3a;
}
.page { min-height: 660px; }
.page *, .page { box-sizing: border-box; }
.page button { border: 0; padding: 0; margin: 0; background: none; display: flex; align-items: center; justify-content: center; white-space: nowrap; }
.page button:disabled { color: #9a9a9a; }
.ico { width: 16px; height: 16px; flex: none; }
i { display: block; font-style: normal; width: 0; height: 0; flex: none; }
i.right { border: 4px solid transparent; border-left-color: #555; border-right-width: 0; }
i.left { border: 4px solid transparent; border-right-color: #bbb; border-left-width: 0; }
i.tri { border: 3px solid transparent; border-top-color: #444; border-bottom-width: 0; }

.window { position: relative; width: calc(100% - 203px); border: 1px solid #0072c6; border-bottom: 0; }
.titlebar { display: grid; grid-template-columns: 1fr auto 1fr; align-items: center; height: 31px; padding-bottom: 1px; }
.titlebar h1 { margin: 0; font-size: 11px; line-height: 14px; font-weight: 400; color: #666; }
.quick { display: flex; }
.quick button { width: 28px; height: 30px; }
.overflow-mark { width: 6px; height: 5px; border-top: 1px solid #666; }
.overflow-mark::after { content: ""; display: block; margin-top: 1px; border: 3px solid transparent; border-top-color: #666; border-bottom: 0; width: 0; }
.winctl { display: flex; justify-content: flex-end; padding-right: 5px; }
.winctl button { width: 30px; height: 30px; }

.ribbon-tabs { display: flex; height: 22px; border-bottom: 1px solid #d2d2d2; }
.page .app-button { width: 68px; background: #0072c6; }
.app-button svg { width: 22px; height: 17px; }
.page .home { width: 53px; height: 22px; border: 1px solid #d2d2d2; border-bottom: 0; background: #fff; color: #0072c6; }

.ribbon { display: flex; height: 93px; padding-top: 4px; border-bottom: 1px solid #d2d2d2; }
.group { flex: none; display: flex; flex-direction: column; border-right: 1px solid #dedede; margin: 2px 0 6px; }
.group > .row, .group > .stack, .group > .column, .group > .large { height: 66px; flex: none; margin-top: -2px; }
.row { display: flex; }
.caption { text-align: center; line-height: 14px; margin-top: 6px; flex: none; }
.stack { display: flex; flex-direction: column; align-items: center; justify-content: center; gap: 14px; padding-top: 1px; }
.column { display: grid; grid-template-rows: repeat(3, 22px); }
.actions { display: grid; grid-template-rows: repeat(3, 22px); }
.page .action { justify-content: flex-start; gap: 4px; }
.action i { opacity: .4; }
.save-actions { padding-left: 10px; width: 118px; }
.edit-actions { grid-auto-flow: column; grid-template-columns: 112px 101px auto; }
.page .large { flex-direction: column; justify-content: flex-start; line-height: 13px; }
.big { width: 32px; height: 36px; flex: none; margin-bottom: 3px; }
.g-records { width: 73px; }
.g-save { width: 145px; }
.g-edit { width: 420px; }
.g-edit .large { width: 54px; margin-right: 5px; }
.g-open { width: 137px; }
.g-more { width: 37px; }
.g-nav { width: 44px; }
.g-close { width: 60px; }
.brand { flex: 1; display: flex; flex-direction: column; align-items: flex-end; justify-content: space-between; padding-top: 31px; }
.logo { display: flex; align-items: center; width: 84px; font-family: Roboto, sans-serif; font-size: 13px; color: #2a2a2a; }
.logo svg { width: 26px; height: 20px; margin-right: 1px; flex: none; }
.logo b { color: #0a5ea8; }
.page .collapse { width: 28px; height: 20px; }

.body { display: flex; height: 319px; }
.content { flex: 1; min-width: 0; padding: 5px 4px 0 5px; display: flex; flex-direction: column; }
.scrollbar { width: 17px; background: #cdcdcd; }
.page .scrollbar button { width: 17px; height: 17px; background: #f0f0f0; }

.tabs { display: flex; align-items: flex-end; height: 27px; border-bottom: 1px solid #ababab; overflow: hidden; margin-bottom: -1px; position: relative; flex: none; }
.page .tab { flex: none; height: 24px; gap: 2px; padding: 0 9px 1px; border: 1px solid #ababab; border-bottom: 0; background: #fff; }
.page .tab.active { height: 26px; padding: 0 10px 1px 12px; box-shadow: 0 1px 0 #fff; }
.tab.active + .tab { border-left: 0; }
.page .main-tabs .active + .tab { padding: 0 11px 1px 12px; }
.page .sub-tabs .tab { padding: 0 11px 1px 9px; }
.page .sub-tabs .tab.active { padding: 0 8px 1px 11px; }
.page .sub-tabs .active + .tab { padding: 0 7px 1px 9px; }
.tab-rest { flex: 1; height: 24px; border-top: 1px solid #ababab; }
.page .tab-nav { width: 19px; height: 26px; flex: none; }

.form { display: grid; grid-template-columns: 67px minmax(0, 430fr) 98px minmax(0, 369fr); grid-auto-rows: 20px; row-gap: 2px; height: 182px; padding: 6px 6px 0 4px; border: 1px solid #ababab; border-top: 0; align-content: start; flex: none; }
.form > label { align-self: center; white-space: nowrap; }
.form > label:nth-of-type(even) { padding-left: 3px; }
.form em { font-style: normal; color: #1f3f90; }
.field { position: relative; display: flex; align-items: stretch; border: 1px solid #ababab; background: #fff; min-width: 0; }
.field input, .field select { appearance: none; flex: 1; min-width: 0; border: 0; padding: 0 2px; margin: 0; background: transparent; outline: 0; border-radius: 0; }
.field input.focused { border: 1px dotted #222; }
.page .clear { width: 17px; }
.clear svg { width: 12px; height: 12px; }
.page .part { width: 16px; border-left: 1px solid #ababab; background: #f0f0f0; }
.part svg { width: 11px; height: 11px; }
.part.look svg { width: 15px; height: 15px; }
.check { display: flex; align-items: center; }

.lower { margin-top: 2px; flex: 1; min-height: 0; display: flex; flex-direction: column; overflow: hidden; }
.subpanel { flex: 1; border-left: 1px solid #ababab; border-right: 1px solid #ababab; padding-top: 2px; overflow: hidden; }
.tools { display: flex; align-items: center; height: 25px; }
.set { display: flex; align-items: center; height: 22px; border-right: 1px solid #c4c4c4; padding: 0 4px 0 2px; }
.tools .set button { width: 26px; height: 22px; }
.tools .set:nth-child(2) { padding-right: 3px; }
.set.solo { padding-right: 3px; }
.tools .set .with-drop { width: 36px; }
.with-drop.dim i { opacity: .5; }
.set i.tri { margin-left: 3px; }
.tools .filter { width: 150px; height: 20px; align-items: center; margin: 0 10px 0 6px; padding-left: 4px; }
.filter select { padding-left: 3px; }
.filter .part { align-self: stretch; }

.grid { border-collapse: separate; border-spacing: 0; table-layout: fixed; width: 100%; margin-top: 2px; }
.grid .c0 { width: 19px; } .grid .c1 { width: 135px; } .grid .c2 { width: 103px; } .grid .c3 { width: 100px; } .grid .c4 { width: 91px; } .grid .c5 { width: 87px; }
.grid th, .grid td { padding: 0 3px; font-weight: 400; text-align: left; white-space: nowrap; overflow: hidden; border-right: 1px solid #a0a0a0; }
.grid thead th, .grid thead td { height: 19px; border-bottom: 1px solid #a0a0a0; }
.grid tbody td { height: 21px; background: #e5f1fb; border-bottom: 1px solid #d0d0d0; border-right-color: #c8c8c8; }
.grid tbody td.m { background: #fff; padding-left: 8px; border-bottom: 0; border-right-color: #888; }
.grid tbody td.current { background: #fff; }

.status { height: 24px; background: #0072c6; margin: 0 -1px; }

.popup { position: absolute; z-index: 5; left: -1px; top: 18px; width: 515px; height: 348px; border: 1px solid #ababab; background: #fff; }
.list-scroll { height: 300px; overflow: hidden; }
.list { border-collapse: separate; border-spacing: 0; table-layout: fixed; width: 100%; }
.list .mark { width: 19px; }
.list .gutter { width: 17px; }
.list td, .list th { padding: 0 3px; height: 21px; font-weight: 400; text-align: left; }
.list thead td, .list thead th { height: 19px; padding-bottom: 1px; }
.list thead th { background: #92c0e0; }
.list thead td:first-child { border-right: 1px solid #ababab; border-bottom: 1px solid #ababab; }
.list .m { border-right: 1px solid #ababab; padding-left: 7px; }
.list .c { background: #fafafa; border-bottom: 1px solid #d0d0d0; }
.list tr:nth-child(odd) .c { background: #f0f0f0; }
.list tr.selected td.c { background: #cde6f7; border: 1px dotted #333; padding: 0 3px 1px 2px; }
.header-grip { position: absolute; right: 20px; top: 3px; width: 7px; height: 4px; border: 1px solid #7c8c9a; border-radius: 2px; }

.menu { position: absolute; left: 412px; top: 6px; width: 188px; padding: 1px; border: 1px solid #a0a0a0; background: linear-gradient(to right, #fafcfe 0 28px, #dcdcdc 28px 29px, #fff 29px); }
.menu hr { height: 1px; margin: 1px 7px 1px 30px; border: 0; background: #d8d8d8; }
.page .item { width: 100%; height: 24px; justify-content: flex-start; border: 1px solid transparent; font-family: Roboto, sans-serif; font-size: 12px; }
.page .item.active { background: #cde6f7; border-color: #7eb4ea; }
.slot { width: 22px; height: 22px; margin: 0 9px 0 1px; display: flex; align-items: center; justify-content: center; flex: none; }
.slot.checked { background: #b1d6f0; box-shadow: inset 0 0 0 1px #66a7e8; }
.item .text { flex: 1; text-align: left; }
.item i.right { margin-right: 9px; border-left-color: #222; border-left-width: 5px; }

.pointer { position: absolute; z-index: 6; left: calc(100% - 28px); top: 147px; width: 90px; height: 90px; }
</style>
